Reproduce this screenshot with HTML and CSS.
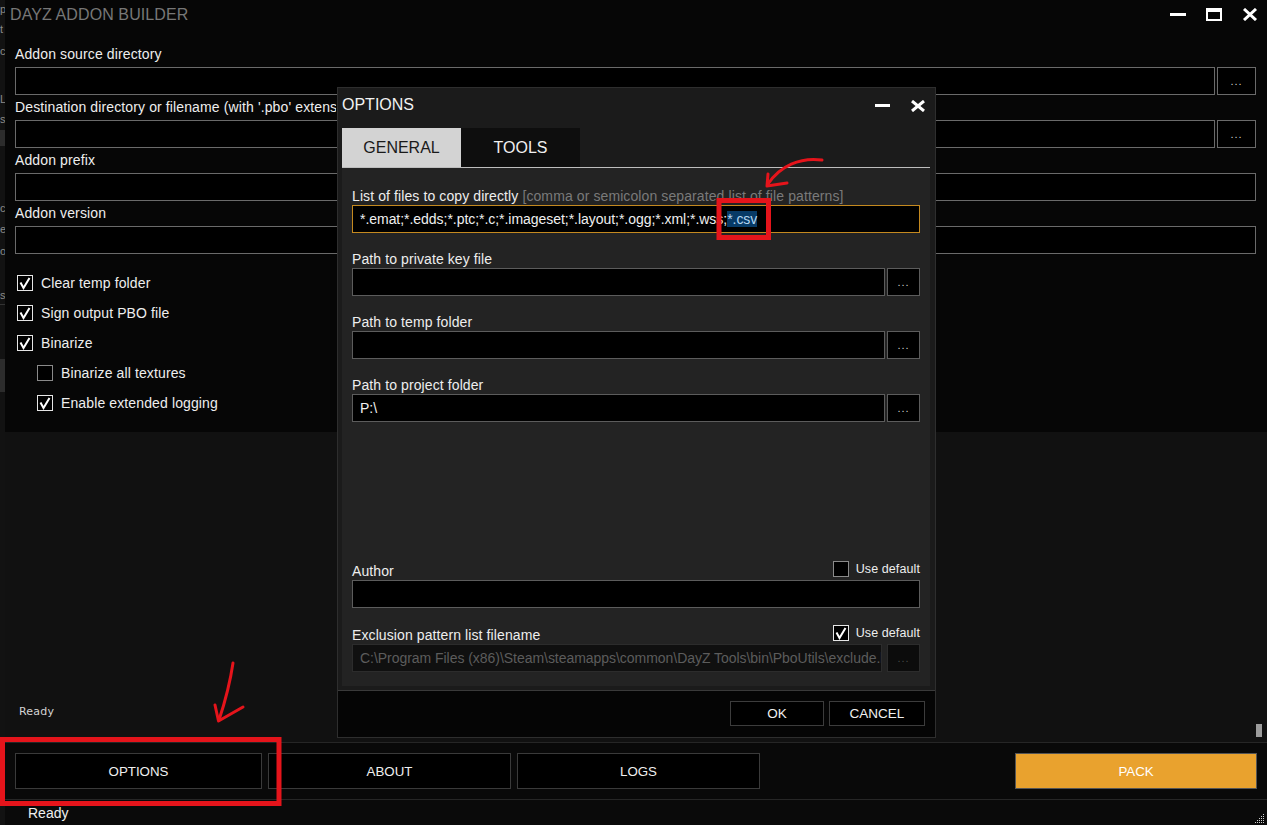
FILE: index.html
```html
<!DOCTYPE html>
<html lang="en">
<head>
<meta charset="utf-8">
<title>DayZ Addon Builder</title>
<link rel="stylesheet" href="styles.css">
</head>
<body>
<div class="screen">
  <div class="behind">
    <div class="bl h18">p</div>
    <div class="bl h22">t</div>
    <div class="bl h22">c</div>
    <div class="bgap h28"></div>
    <div class="bl h18">L</div>
    <div class="bl h22">s</div>
    <div class="bblock h16"></div>
    <div class="bgap h52"></div>
    <div class="bl h20">c</div>
    <div class="bl h22">e</div>
    <div class="bl h22">o</div>
    <div class="bgap h23"></div>
    <div class="bl h20 bsep">s</div>
    <div class="bgap h54"></div>
    <div class="bblock h33"></div>
  </div>

  <div class="app">
    <header class="titlebar">
      <div class="title">DAYZ ADDON BUILDER</div>
      <div class="winctl">
        <svg viewBox="0 0 16 13" class="wc"><rect x="0" y="5" width="16" height="3" fill="#fff"/></svg>
        <svg viewBox="0 0 16 13" class="wc"><rect x="1" y="1" width="14" height="11" fill="none" stroke="#fff" stroke-width="2"/><rect x="0" y="0" width="16" height="4" fill="#fff"/></svg>
        <svg viewBox="0 0 16 13" class="wc"><path d="M2 1 L14 12 M14 1 L2 12" stroke="#fff" stroke-width="3" fill="none"/></svg>
      </div>
    </header>

    <section class="form">
      <div class="field">
        <div class="flabel">Addon source directory</div>
        <div class="frow"><div class="input"></div><div class="browse">...</div></div>
      </div>
      <div class="field">
        <div class="flabel"><span class="clip">Destination directory or filename (with '.pbo' extension)</span></div>
        <div class="frow"><div class="input"></div><div class="browse">...</div></div>
      </div>
      <div class="field">
        <div class="flabel">Addon prefix</div>
        <div class="frow"><div class="input"></div></div>
      </div>
      <div class="field">
        <div class="flabel">Addon version</div>
        <div class="frow"><div class="input"></div></div>
      </div>
    </section>

    <section class="checks">
      <div class="chk"><span class="box"><svg viewBox="0 0 14 14"><path d="M2.5 6.5 L5.5 12 L11.5 2" fill="none" stroke="#fff" stroke-width="2"/></svg></span>Clear temp folder</div>
      <div class="chk"><span class="box"><svg viewBox="0 0 14 14"><path d="M2.5 6.5 L5.5 12 L11.5 2" fill="none" stroke="#fff" stroke-width="2"/></svg></span>Sign output PBO file</div>
      <div class="chk"><span class="box"><svg viewBox="0 0 14 14"><path d="M2.5 6.5 L5.5 12 L11.5 2" fill="none" stroke="#fff" stroke-width="2"/></svg></span>Binarize</div>
      <div class="chk sub"><span class="box off"></span>Binarize all textures</div>
      <div class="chk sub"><span class="box"><svg viewBox="0 0 14 14"><path d="M2.5 6.5 L5.5 12 L11.5 2" fill="none" stroke="#fff" stroke-width="2"/></svg></span>Enable extended logging</div>
    </section>

    <section class="log">
      <div class="log-text">Ready</div>
      <div class="thumb"></div>
    </section>

    <footer class="actions">
      <div class="btn w-options">OPTIONS</div>
      <div class="btn w-std">ABOUT</div>
      <div class="btn w-std">LOGS</div>
      <div class="grow"></div>
      <div class="btn pack">PACK</div>
    </footer>

    <div class="status">
      <span>Ready</span>
      <svg class="grip" viewBox="0 0 12 12">
        <g fill="#cfcfcf">
          <rect x="10" y="1" width="1" height="1"/>
          <rect x="8" y="3" width="1" height="1"/><rect x="10" y="3" width="1" height="1"/>
          <rect x="6" y="5" width="1" height="1"/><rect x="8" y="5" width="1" height="1"/><rect x="10" y="5" width="1" height="1"/>
          <rect x="4" y="7" width="1" height="1"/><rect x="6" y="7" width="1" height="1"/><rect x="8" y="7" width="1" height="1"/><rect x="10" y="7" width="1" height="1"/>
          <rect x="2" y="9" width="1" height="1"/><rect x="4" y="9" width="1" height="1"/><rect x="6" y="9" width="1" height="1"/><rect x="8" y="9" width="1" height="1"/><rect x="10" y="9" width="1" height="1"/>
        </g>
      </svg>
    </div>
  </div>

  <div class="dialog">
    <div class="dlg-title">
      <div class="dlg-t">OPTIONS</div>
      <div class="dlg-ctl">
        <svg viewBox="0 0 15 12" class="dmin"><rect x="0" y="4" width="15" height="3" fill="#fff"/></svg>
        <svg viewBox="0 0 16 12" class="dx"><path d="M2 1 L14 11 M14 1 L2 11" stroke="#fff" stroke-width="3" fill="none"/></svg>
      </div>
    </div>
    <div class="tabs">
      <div class="tab active">GENERAL</div>
      <div class="tab">TOOLS</div>
    </div>
    <div class="panel">
      <div class="dfield">
        <div class="dlabel"><span>List of files to copy directly <span class="hint">[comma or semicolon separated list of file patterns]</span></span></div>
        <div class="drow"><div class="dinput focus">*.emat;*.edds;*.ptc;*.c;*.imageset;*.layout;*.ogg;*.xml;*.wss;<span class="sel">*.csv</span></div></div>
      </div>
      <div class="dfield">
        <div class="dlabel"><span>Path to private key file</span></div>
        <div class="drow"><div class="dinput"></div><div class="dbrowse">...</div></div>
      </div>
      <div class="dfield">
        <div class="dlabel"><span>Path to temp folder</span></div>
        <div class="drow"><div class="dinput"></div><div class="dbrowse">...</div></div>
      </div>
      <div class="dfield">
        <div class="dlabel"><span>Path to project folder</span></div>
        <div class="drow"><div class="dinput">P:\</div><div class="dbrowse">...</div></div>
      </div>
      <div class="spacer"></div>
      <div class="dfield">
        <div class="dlabel"><span>Author</span><span class="opt"><span class="box off"></span><span class="opt-t">Use default</span></span></div>
        <div class="drow"><div class="dinput"></div></div>
      </div>
      <div class="dfield">
        <div class="dlabel tall"><span>Exclusion pattern list filename</span><span class="opt"><span class="box"><svg viewBox="0 0 14 14"><path d="M2.5 6.5 L5.5 12 L11.5 2" fill="none" stroke="#fff" stroke-width="2"/></svg></span><span class="opt-t">Use default</span></span></div>
        <div class="drow wide"><div class="dinput disabled">C:\Program Files (x86)\Steam\steamapps\common\DayZ Tools\bin\PboUtils\exclude.lst</div><div class="dbrowse disabled">...</div></div>
      </div>
    </div>
    <div class="dlg-foot">
      <div class="dbtn ok">OK</div>
      <div class="dbtn cancel">CANCEL</div>
    </div>
  </div>

  <svg class="annot" viewBox="0 0 1267 825" width="1267" height="825">
    <g fill="none" stroke="#e5141b">
      <rect x="2.5" y="739.5" width="276.5" height="64" stroke-width="5"/>
      <rect x="719" y="200.5" width="49.5" height="37" stroke-width="5"/>
      <g stroke-width="3" stroke-linecap="round" stroke-linejoin="round">
        <path d="M233 663 Q229 690 219 720"/>
        <path d="M215 705 L218.5 721 L243 707"/>
        <path d="M822 160 C800 157 780 166 768 184"/>
        <path d="M768 174 L767 186 L787 183"/>
      </g>
    </g>
  </svg>
</div>
</body>
</html>
```
FILE: styles.css
```css
* { box-sizing: border-box; }
html, body { margin: 0; padding: 0; }
body {
  width: 1267px;
  height: 825px;
  overflow: hidden;
  background: #060606;
  font-family: "Liberation Sans", Arial, sans-serif;
  font-size: 14px;
  color: #eeeeee;
}
.screen { position: relative; width: 1267px; height: 825px; display: flex; }

/* window behind */
.behind { width: 5px; flex: none; background: #121212; overflow: hidden; display: flex; flex-direction: column; }
.bl { font-size: 11px; color: #8a8a8a; white-space: nowrap; display: flex; align-items: center; }
.bblock { background: #2c2c2c; }
.bsep { border-bottom: 1px solid #333; }
.h16 { height: 16px; } .h18 { height: 18px; } .h20 { height: 20px; } .h22 { height: 22px; }
.h23 { height: 23px; } .h28 { height: 28px; } .h33 { height: 33px; } .h52 { height: 52px; } .h54 { height: 54px; }

/* main window */
.app { flex: 1; min-width: 0; display: flex; flex-direction: column; background: #060606; }
.titlebar { height: 42px; flex: none; display: flex; justify-content: space-between; align-items: flex-start; padding: 6px 9px 0 5px; }
.title { font-size: 16px; line-height: 18px; color: #777; letter-spacing: 0.1px; }
.winctl { display: flex; gap: 20px; margin-top: 2px; }
.wc { width: 16px; height: 13px; display: block; }

.form { flex: none; padding: 0 11px 0 10px; }
.field { display: flex; flex-direction: column; }
.flabel { height: 25px; line-height: 25px; white-space: nowrap; color: #eeeeee; letter-spacing: 0.12px; display: flex; }
.clip { display: block; width: 321px; overflow: hidden; white-space: nowrap; }
.frow { display: flex; gap: 2px; height: 28px; }
.input { flex: 1; background: #000; border: 1px solid #6a6a6a; }
.browse {
  width: 39px; flex: none; background: #000; border: 1px solid #6a6a6a;
  color: #d0d0d0; font-size: 11px; letter-spacing: 1px;
  display: flex; align-items: center; justify-content: center;
}

.checks { flex: none; padding: 14px 0 14px 12px; }
.chk { height: 30px; display: flex; align-items: center; gap: 8px; line-height: 16px; color: #eeeeee; letter-spacing: 0.12px; }
.chk.sub { padding-left: 20px; }
.box { width: 16px; height: 16px; flex: none; border: 1px solid #e6e6e6; background: #000; display: block; }
.box svg { width: 14px; height: 14px; display: block; }
.box.off { border-color: #8a8a8a; }

.log { flex: 1; background: #111; display: flex; justify-content: space-between; align-items: flex-end; padding: 0 5px 5px 14px; }
.log-text { font-family: "DejaVu Sans", sans-serif; font-size: 11px; line-height: 13px; color: #d4d4d4; margin-bottom: 19px; letter-spacing: 0.2px; }
.thumb { width: 6px; height: 13px; background: #9c9c9c; }

.actions { flex: none; height: 57px; border-top: 1px solid #262626; background: #090909; display: flex; gap: 6px; padding: 10px 10px; }
.btn {
  height: 36px; background: #000; border: 1px solid #3a3a3a; color: #f0f0f0;
  font-size: 13.3px; display: flex; align-items: center; justify-content: center;
}
.w-options { width: 247px; }
.w-std { width: 243px; }
.grow { flex: 1; }
.pack { width: 242px; background: #e9a22e; border-color: #555; color: #fff; }

.status { flex: none; height: 26px; border-top: 1px solid #262626; background: #0a0a0a; padding: 5px 2px 0 23px; line-height: 16px; display: flex; justify-content: space-between; color: #f0f0f0; }
.grip { width: 12px; height: 12px; align-self: flex-end; display: block; }

/* dialog */
.dialog {
  position: absolute; left: 337px; top: 87px; width: 599px; height: 651px;
  background: #1b1b1b; border: 1px solid #2e2e2e;
  display: flex; flex-direction: column;
}
.dlg-title { height: 40px; flex: none; display: flex; justify-content: space-between; align-items: flex-start; padding: 8px 9px 0 4px; }
.dlg-t { font-size: 16px; line-height: 18px; color: #f2f2f2; }
.dlg-ctl { display: flex; gap: 20px; margin-top: 4px; }
.dmin { width: 15px; height: 12px; display: block; }
.dx { width: 16px; height: 12px; display: block; }

.tabs { height: 40px; flex: none; display: flex; margin: 0 5px 0 4px; border-bottom: 1px solid #bdbdbd; }
.tab { width: 119px; display: flex; align-items: center; justify-content: center; font-size: 16px; background: #0e0e0e; color: #f0f0f0; }
.tab.active { background: #d3d3d3; color: #1a1a1a; }

.panel { height: 518px; flex: none; margin: 0 5px 0 4px; background: #232323; padding: 2px 10px 14px; display: flex; flex-direction: column; }
.dfield { flex: none; display: flex; flex-direction: column; }
.dlabel { height: 35px; display: flex; align-items: flex-end; justify-content: space-between; padding-bottom: 1px; line-height: 16px; white-space: nowrap; color: #eeeeee; letter-spacing: 0.1px; }
.dlabel.tall { height: 36px; }
.hint { color: #7a7a7a; }
.drow { display: flex; gap: 2px; height: 28px; }
.drow.wide { gap: 5px; }
.dinput {
  flex: 1; min-width: 0; background: #000; border: 1px solid #5c5c5c; padding: 0 7px;
  display: flex; align-items: center; white-space: nowrap; overflow: hidden; line-height: 16px; color: #f0f0f0;
  letter-spacing: -0.04px;
}
.dinput.focus { border-color: #c4891f; }
.sel { background: #073a66; color: #b4d6f0; }
.dinput.disabled { background: #101010; border-color: #2c2c2c; color: #5c5c5c; }
.dbrowse {
  width: 33px; flex: none; background: #000; border: 1px solid #5c5c5c;
  color: #d0d0d0; font-size: 11px; letter-spacing: 1px;
  display: flex; align-items: center; justify-content: center;
}
.dbrowse.disabled { background: #0c0c0c; border-color: #2c2c2c; color: #4a4a4a; }
.spacer { flex: 1; }
.opt { display: flex; align-items: center; gap: 7px; margin-bottom: 2px; }
.opt-t { font-size: 12.5px; line-height: 14px; color: #eeeeee; }

.dlg-foot { height: 47px; flex: none; margin-top: auto; border-top: 1px solid #3a3a3a; background: #050505; display: flex; justify-content: flex-end; gap: 5px; padding: 10px 10px 0 0; }
.dbtn { height: 25px; background: #000; border: 1px solid #3c3c3c; color: #f0f0f0; font-size: 13.5px; display: flex; align-items: center; justify-content: center; }
.ok { width: 94px; }
.cancel { width: 96px; }

/* annotation overlay */
.annot { position: absolute; left: 0; top: 0; pointer-events: none; }
```
